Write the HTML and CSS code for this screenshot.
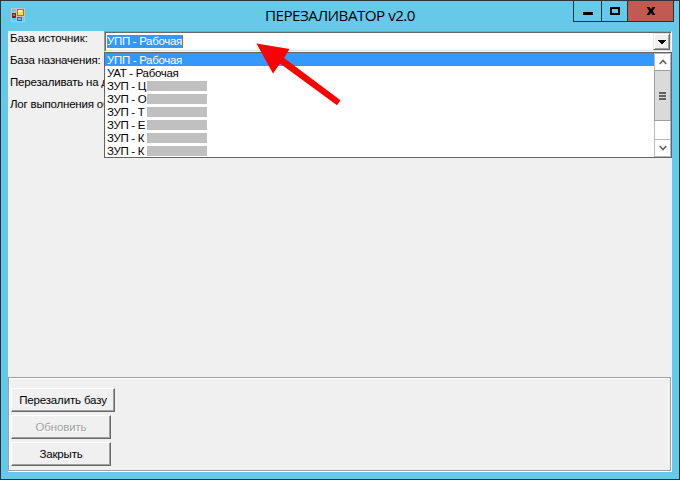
FILE: index.html
```
<!DOCTYPE html>
<html lang="ru">
<head>
<meta charset="utf-8">
<title>ПЕРЕЗАЛИВАТОР v2.0</title>
<link rel="stylesheet" href="styles.css">
</head>
<body>
<div class="window">
  <header class="titlebar">
    <svg class="app-icon" width="14" height="14" viewBox="0 0 14 14" shape-rendering="crispEdges">
      <path fill="#c3c4c6" d="M0 0h14v14H0z"/>
      <path fill="#69cbec" d="M1 1h4v3H1zM1 10h4v3H1zM12 9h1v4h-1z"/>
      <path fill="#8f1717" d="M1 5h4v5H1z"/><path fill="#dc6254" d="M2 6h2v2H2z"/>
      <path fill="#a77b12" d="M6 1h7v7H6z"/><path fill="#ffda5c" d="M7 2h5v5H7z"/><path fill="#fff0a5" d="M7 2h4v2H7z"/>
      <path fill="#315fb0" d="M6 9h5v4H6z"/><path fill="#80b9f5" d="M7 10h3v2H7z"/>
    </svg>
    <h1 class="title">ПЕРЕЗАЛИВАТОР v2.0</h1>
    <div class="controls">
      <div class="control min"><svg width="10" height="3"><path d="M0 0h10v3H0z"/></svg></div>
      <div class="control max"><svg width="10" height="8"><path d="M0 0h10v8H0zM2 2v4h6V2z" fill-rule="evenodd"/></svg></div>
      <div class="control close"><svg width="10" height="8" viewBox="0 0 10 8"><path d="M.5 0h3L5 2.3 6.500 0h3L6.700 4l2.800 4h-3L5 5.700 3.500 8h-3l2.800-4z"/></svg></div>
    </div>
  </header>
  <main class="client">
    <div class="form">
      <div class="labels">
        <div class="label source">База источник:</div>
        <div class="label">База назначения:</div>
        <div class="label">Перезаливать на д</div>
        <div class="label">Лог выполнения об</div>
      </div>
      <div class="combo">
        <span class="value">УПП - Рабочая</span>
        <span class="drop"><svg width="8" height="4" shape-rendering="crispEdges"><path d="M0 0h8v1H7v1H6v1H5v1H3V3H2V2H1V1H0z"/></svg></span>
        <div class="list">
          <div class="options">
            <div class="option selected">УПП - Рабочая</div>
            <div class="option work">УАТ - Рабочая</div>
            <div class="option"><span class="name">ЗУП - Ц</span><i class="mask"></i></div>
            <div class="option"><span class="name">ЗУП - О</span><i class="mask"></i></div>
            <div class="option"><span class="name">ЗУП - Т</span><i class="mask"></i></div>
            <div class="option"><span class="name">ЗУП - Е</span><i class="mask"></i></div>
            <div class="option"><span class="name">ЗУП - К</span><i class="mask"></i></div>
            <div class="option"><span class="name">ЗУП - К</span><i class="mask"></i></div>
          </div>
          <div class="scrollbar">
            <div class="arrow up"><svg width="8" height="6"><path d="M.7 5 4 1.500 7.300 5"/></svg></div>
            <div class="thumb"><i></i><i></i><i></i></div>
            <div class="track"></div>
            <div class="arrow"><svg width="8" height="6"><path d="M.7 1 4 4.500 7.300 1"/></svg></div>
          </div>
        </div>
      </div>
    </div>
    <div class="panel">
      <button class="btn wide">Перезалить базу</button>
      <button class="btn" disabled>Обновить</button>
      <button class="btn exit">Закрыть</button>
    </div>
  </main>
  <svg class="pointer" width="88" height="68" viewBox="0 0 88 68"><path fill="#f00" d="M1.500 3.500 34.500 9 29 18 85.500 60.200 82 65.200 25 23.500 18 33.500z"/></svg>
</div>
</body>
</html>
```
FILE: styles.css
```
* { box-sizing: border-box; }
body { margin: 0; font: 11.500px/13px "Liberation Sans", Arial, sans-serif; color: #000; }
.window {
  position: relative;
  width: 680px;
  height: 480px;
  padding: 0 7px 7px;
  background: #67c9ea;
  border: 1px solid #2e3338;
  overflow: hidden;
}
.titlebar { display: flex; height: 30px; }
.app-icon { margin: 7px 0 0 3px; }
.title {
  flex: 1;
  margin: 0 0 0 240px;
  font: 15.200px/29px "Open Sans", "Noto Sans", sans-serif;
  letter-spacing: -0.520px;
  white-space: nowrap;
}
.controls {
  display: flex;
  width: 101px;
  height: 21px;
  margin-right: -2px;
  border: 1px solid #26323a;
  border-top: 0;
}
.control { display: flex; align-items: center; justify-content: center; width: 28px; border-right: 1px solid #26323a; }
.control.max { width: 26px; }
.min svg { margin-top: 5px; }
.close { flex: 1; border: 0; background: #c35a50; }
.client { display: flex; flex-direction: column; height: 441px; background: #f0f0f0; }
.form { display: flex; height: 346px; }
.labels { width: 96px; padding: 1px 0 0 2px; }
.label { height: 22px; white-space: nowrap; letter-spacing: -0.200px; }
.label.source { letter-spacing: -0.100px; }
.combo {
  position: relative;
  display: flex;
  align-items: center;
  justify-content: space-between;
  width: 568px;
  height: 21px;
  padding-left: 1px;
  background: #fff;
  border: 1px solid #9c9c9c;
  border-right-color: #fff;
  border-bottom-color: #fff;
  box-shadow: inset 1px 1px #696969, inset -1px -1px #e3e3e3;
}
.value { margin-left: 1px; height: 13px; width: 76px; color: #fff; background: #3399ff; border-right: 1px solid #cc6600; white-space: nowrap; letter-spacing: -0.320px; }
.drop {
  display: flex;
  align-items: center;
  justify-content: center;
  width: 17px;
  height: 17px;
  margin-right: 1px;
  background: #f0f0f0;
  border: 1px solid #e3e3e3;
  border-right-color: #696969;
  border-bottom-color: #696969;
  box-shadow: inset 1px 1px #fff, inset -1px -1px #a0a0a0;
}
.list {
  position: absolute;
  top: 20px;
  left: -1px;
  display: flex;
  width: 568px;
  height: 106px;
  background: #fff;
  border: 1px solid #646464;
}
.options { flex: 1; }
.option { display: flex; align-items: center; height: 13px; padding: 1px 0 0 2px; white-space: nowrap; letter-spacing: -0.320px; }
.selected { background: #3399ff; color: #fff; }
.name { width: 40px; }
.mask { width: 60px; height: 10px; background: #c0c0c0; }
.scrollbar { display: flex; flex-direction: column; width: 17px; height: 104px; border: 1px solid #bababa; }
.arrow { display: flex; align-items: center; justify-content: center; height: 17px; border-top: 1px solid #bababa; }
.arrow.up { height: 16px; border: 0; }
.arrow path { fill: none; stroke: #606060; stroke-width: 1.600; }
.thumb {
  display: flex;
  flex-direction: column;
  align-items: center;
  justify-content: center;
  gap: 1px;
  height: 51px;
  margin: 0 -1px;
  background: #dadada;
  border: 1px solid #a0a0a0;
}
.thumb i { width: 7px; height: 2px; background: #606060; }
.track { flex: 1; }
.panel {
  display: flex;
  flex-direction: column;
  align-items: flex-start;
  gap: 3px;
  height: 94px;
  width: 663px;
  padding: 10px 0 0 2px;
  border: 1px solid #a0a0a0;
  box-shadow: inset 1px 1px #fff, 1px 1px #fff;
}
.btn {
  width: 100px;
  height: 24px;
  padding: 0;
  font: inherit;
  letter-spacing: -0.150px;
  color: #000;
  background: #f0f0f0;
  border: 1px solid #fff;
  border-right-color: #696969;
  border-bottom-color: #696969;
  box-shadow: inset -1px -1px #a0a0a0;
  white-space: nowrap;
}
.btn.wide { width: 104px; }
.btn:disabled { color: #a0a0a0; text-shadow: 1px 1px #fff; }
.pointer { position: absolute; left: 254px; top: 39px; }
```
